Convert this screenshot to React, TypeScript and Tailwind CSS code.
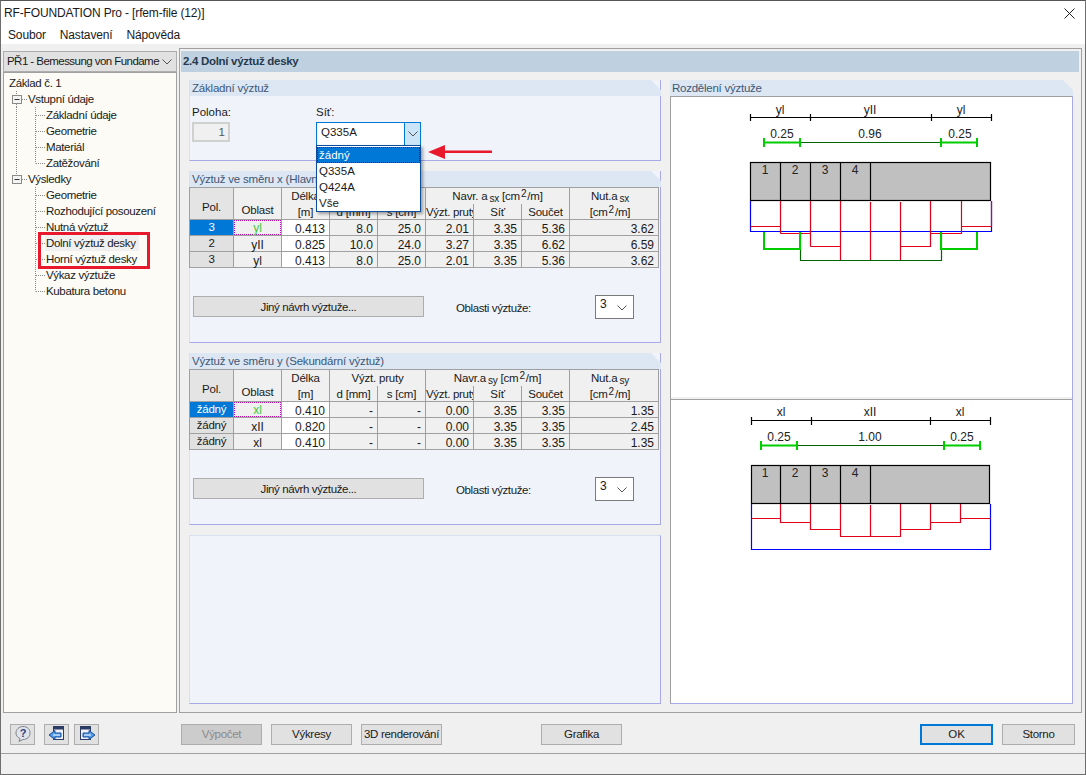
import React from "react";

const font = "font-['Liberation_Sans',Arial,sans-serif]";

type TreeRow = { label: string; kind: "root" | "group" | "child"; last?: boolean; groupLine?: boolean; selected?: boolean };

const tree: TreeRow[] = [
  { label: "Základ č. 1", kind: "root" },
  { label: "Vstupní údaje", kind: "group", groupLine: true },
  { label: "Základní údaje", kind: "child", groupLine: true },
  { label: "Geometrie", kind: "child", groupLine: true },
  { label: "Materiál", kind: "child", groupLine: true },
  { label: "Zatěžování", kind: "child", groupLine: true, last: true },
  { label: "Výsledky", kind: "group" },
  { label: "Geometrie", kind: "child" },
  { label: "Rozhodující posouzení", kind: "child" },
  { label: "Nutná výztuž", kind: "child" },
  { label: "Dolní výztuž desky", kind: "child", selected: true },
  { label: "Horní výztuž desky", kind: "child" },
  { label: "Výkaz výztuže", kind: "child" },
  { label: "Kubatura betonu", kind: "child", last: true },
];

const dots = { stroke: "#8a8a8a", strokeWidth: 1, strokeDasharray: "1 1", fill: "none" };

const TreeGuide = ({ row }: { row: TreeRow }) => {
  if (row.kind === "root") return <div className="w-[5px] shrink-0" />;
  if (row.kind === "group") {
    return (
      <svg width="24" height="16" className="shrink-0">
        <path d="M12.5 0V3" {...dots} />
        {row.groupLine && <path d="M12.5 13V16" {...dots} />}
        <path d="M18 8.5H23" {...dots} />
        <rect x="8.5" y="4.5" width="9" height="8" fill="#f4f4f4" stroke="#8a8a8a" />
        <path d="M10.5 8.5H15.5" stroke="#333" />
      </svg>
    );
  }
  return (
    <svg width="42" height="16" className="shrink-0">
      {row.groupLine && <path d="M12.5 0V16" {...dots} />}
      <path d={row.last ? "M31.5 0V8.5" : "M31.5 0V16"} {...dots} />
      <path d="M32 8.5H41" {...dots} />
    </svg>
  );
};

const Chevron = ({ className = "" }: { className?: string }) => (
  <svg width="10" height="6" viewBox="0 0 10 6" className={className}>
    <path d="M0.5 0.5L5 5L9.5 0.5" fill="none" stroke="#555" strokeWidth="1" />
  </svg>
);

const Panel = ({ title, className, children }: { title?: string; className: string; children?: React.ReactNode }) => (
  <div className={`flex flex-col shrink-0 bg-[#f0f4fa] border-r border-b border-l border-r-[#a9a9e6] border-b-[#a9a9e6] border-l-[#d9e0f0] ${className}`}>
    {title && (
      <div className="h-4 leading-4 pl-[2px] tracking-[-0.2px] text-[#3c5878] bg-[#dde6f3] shrink-0 -mr-px [clip-path:polygon(0_0,calc(100%-10px)_0,100%_10px,100%_100%,0_100%)]">
        {title}
      </div>
    )}
    {children}
  </div>
);

const cellLine = "border-r border-b border-[#a0a0a0]";
const headText = "text-[11.5px] tracking-[-0.2px]";

const Sub = ({ children }: { children: React.ReactNode }) => <span className="text-[10px] ml-[2px] align-[-2px] leading-none">{children}</span>;
const Sup = ({ children }: { children: React.ReactNode }) => <span className="text-[10px] mx-[1px] align-[3px] leading-none">{children}</span>;

type TableRow = { pol: string; area: string; len: string; d: string; s: string; bars: string; mesh: string; sum: string; req: string };

const ReinfTable = ({ head, rows }: { head: { group: string; navr: React.ReactNode; nut: React.ReactNode }; rows: TableRow[] }) => (
  <div className="grid grid-cols-[45px_48px_48px_48px_48px_48px_48px_48px_89px] grid-rows-[16px_16px_16px_16px_16px] w-[470px] text-[12px] leading-4 text-[#1a1a1a] text-center border-t border-[#a0a0a0] -ml-px">
    <div className={`row-span-2 bg-[#e4e4e4] border-l border-l-[#a0a0a0] pt-[11px] ${headText} ${cellLine}`}>Pol.</div>
    <div className={`row-span-2 bg-[#f0f0f0] pt-[14px] ${headText} ${cellLine}`}>Oblast</div>
    <div className={`row-span-2 bg-[#f0f0f0] ${headText} ${cellLine}`}>
      Délka
      <br />
      [m]
    </div>
    <div className={`col-span-2 bg-[#f0f0f0] border-r border-[#a0a0a0] ${headText}`}>{head.group}</div>
    <div className={`col-span-3 bg-[#f0f0f0] border-r border-[#a0a0a0] whitespace-nowrap ${headText}`}>{head.navr}</div>
    <div className={`row-span-2 bg-[#f0f0f0] pr-2 whitespace-nowrap ${headText} ${cellLine}`}>{head.nut}</div>
    <div className={`bg-[#f0f0f0] ${headText} ${cellLine}`}>d [mm]</div>
    <div className={`bg-[#f0f0f0] ${headText} ${cellLine}`}>s [cm]</div>
    <div className={`bg-[#f0f0f0] overflow-hidden whitespace-nowrap text-[11.5px] tracking-[-0.3px] ${cellLine}`}>Výzt. pruty</div>
    <div className={`bg-[#f0f0f0] ${headText} ${cellLine}`}>Síť</div>
    <div className={`bg-[#f0f0f0] ${headText} ${cellLine}`}>Součet</div>
    {rows.map((r, i) => {
      const num = `text-right pr-[4px] bg-[#f0f0f0] leading-[18px] ${cellLine}`;
      return (
        <React.Fragment key={i}>
          <div className={`border-l border-l-[#a0a0a0] border-b border-b-[#a0a0a0] border-r border-r-[#a0a0a0] ${headText} ${i === 0 ? "bg-[#0078d7] text-white" : "bg-[#e1e1e1] border-b-[#696969] border-r-[#696969]"}`}>
            <div className="leading-[15px]">{r.pol}</div>
          </div>
          {i === 0 ? (
            <div className={`bg-[#f0f0f0] ${cellLine}`}>
              <div className="border border-dotted border-[#c000c0] h-[15px] leading-[15px] text-[#46c83c]">{r.area}</div>
            </div>
          ) : (
            <div className={`bg-[#f0f0f0] leading-[18px] ${cellLine}`}>{r.area}</div>
          )}
          <div className={`text-right pr-[4px] bg-white leading-[18px] ${cellLine}`}>{r.len}</div>
          <div className={num}>{r.d}</div>
          <div className={num}>{r.s}</div>
          <div className={num}>{r.bars}</div>
          <div className={num}>{r.mesh}</div>
          <div className={num}>{r.sum}</div>
          <div className={num}>{r.req}</div>
        </React.Fragment>
      );
    })}
  </div>
);

const DesignRow = ({ offset }: { offset: string }) => (
  <div className={`flex items-start pl-[3px] ${offset}`}>
    <button className="w-[231px] h-[21px] mt-px bg-[#e1e1e1] border border-[#adadad] tracking-[-0.4px] leading-[18px] text-[#1a1a1a]">Jiný návrh výztuže...</button>
    <div className="ml-[32px] mt-[5px] w-[139px] tracking-[-0.4px] leading-4 text-[#1a1a1a]">Oblasti výztuže:</div>
    <div className="w-[39px] h-[24px] bg-white border border-[#7a7a7a] flex justify-between pl-[4px] pr-[3px] text-[12px] leading-[17px] text-[#1a1a1a]">
      3
      <Chevron className="mt-[9px] mr-[3px]" />
    </div>
  </div>
);

const label = { fontFamily: "Liberation Sans, Arial, sans-serif", fontSize: 12, fill: "#222", textAnchor: "middle" as const };

const Diagram = ({ v }: { v: "y" | "x" }) => {
  if (v === "y") {
    return (
      <svg width="401" height="300" viewBox="671 97 401 300" className="block">
        <path d="M750.5 117.5H991.5M750.5 114V121M810.5 114V121M931.5 114V121M991.5 114V121" stroke="#000" fill="none" strokeWidth="1.2" />
        <text x="780" y="114" {...label}>yl</text>
        <text x="870" y="114" {...label}>yII</text>
        <text x="961" y="114" {...label}>yl</text>
        <text x="782" y="138" {...label}>0.25</text>
        <text x="870" y="138" {...label}>0.96</text>
        <text x="960" y="138" {...label}>0.25</text>
        <path d="M800 142.5H941" stroke="#006400" fill="none" strokeWidth="1.2" />
        <path d="M764 142.5H800M941 142.5H977M764 138V147M800 138V147M941 138V147M977 138V147" stroke="#00cc00" strokeWidth="2" fill="none" />
        <rect x="750.5" y="162.5" width="240" height="38" fill="#c0c0c0" stroke="#000" strokeWidth="1.2" />
        <path d="M780.5 162V200M810.5 162V200M840.5 162V200M870.5 162V200" stroke="#000" strokeWidth="1.2" />
        <text x="765" y="174" {...label}>1</text>
        <text x="795" y="174" {...label}>2</text>
        <text x="825" y="174" {...label}>3</text>
        <text x="855" y="174" {...label}>4</text>
        <path d="M750.5 201V231.5H991.5V201" stroke="#0000ff" fill="none" strokeWidth="1.2" />
        <path d="M750.5 226.5H780.5V201M780.5 233.5H810.5V201M810.5 246.5H840.5V201M840.5 201V260.5M870.5 202V260.5M900.5 202V260.5M900.5 246.5H930.5V201M930.5 233.5H961.5V201M961.5 226.5H991.5V201M780.5 226V233.5M810.5 233V246.5M930.5 233V246.5M961.5 226V233.5" stroke="#e0001a" fill="none" strokeWidth="1.2" />
        <path d="M800.5 232V260.5H941.5V232" stroke="#006400" fill="none" strokeWidth="1.2" />
        <path d="M764 232V249H800V232M941 232V249H977V232" stroke="#00cc00" strokeWidth="2" fill="none" />
      </svg>
    );
  }
  return (
    <svg width="401" height="300" viewBox="671 400 401 300" className="block">
      <path d="M751.5 420.5H990.5M751.5 417V425M811.5 417V425M930.5 417V425M990.5 417V425" stroke="#000" fill="none" strokeWidth="1.2" />
      <text x="781" y="416" {...label}>xl</text>
      <text x="870" y="416" {...label}>xII</text>
      <text x="960" y="416" {...label}>xl</text>
      <text x="779" y="441" {...label}>0.25</text>
      <text x="870" y="441" {...label}>1.00</text>
      <text x="962" y="441" {...label}>0.25</text>
      <path d="M797 445.5H944" stroke="#006400" fill="none" strokeWidth="1.2" />
      <path d="M761 445.5H797M944 445.5H980M761 441V450M797 441V450M944 441V450M980 441V450" stroke="#00cc00" strokeWidth="2" fill="none" />
      <rect x="751.5" y="465.5" width="238" height="38" fill="#c0c0c0" stroke="#000" strokeWidth="1.2" />
      <path d="M780.5 465V503M810.5 465V503M840.5 465V503M870.5 465V503" stroke="#000" strokeWidth="1.2" />
      <text x="765" y="477" {...label}>1</text>
      <text x="795" y="477" {...label}>2</text>
      <text x="825" y="477" {...label}>3</text>
      <text x="855" y="477" {...label}>4</text>
      <path d="M751.5 504V549.5H990.5V504" stroke="#0000ff" fill="none" strokeWidth="1.2" />
      <path d="M751.5 518.5H780.5V504V522.5H810.5V504V529.5H840.5V504V536.5H900.5V504V529.5H930.5V504V522.5H960.5V504V518.5H990.5M870.5 505V536" stroke="#e0001a" fill="none" strokeWidth="1.2" />
    </svg>
  );
};

const FooterBtn = ({ children, className = "" }: { children?: React.ReactNode; className?: string }) => (
  <button className={`h-[21px] bg-[#e1e1e1] border border-[#adadad] tracking-[-0.3px] leading-[18px] text-[#1a1a1a] ${className}`}>{children}</button>
);

const xRows: TableRow[] = [
  { pol: "3", area: "yl", len: "0.413", d: "8.0", s: "25.0", bars: "2.01", mesh: "3.35", sum: "5.36", req: "3.62" },
  { pol: "2", area: "yII", len: "0.825", d: "10.0", s: "24.0", bars: "3.27", mesh: "3.35", sum: "6.62", req: "6.59" },
  { pol: "3", area: "yl", len: "0.413", d: "8.0", s: "25.0", bars: "2.01", mesh: "3.35", sum: "5.36", req: "3.62" },
];
const yRows: TableRow[] = [
  { pol: "žádný", area: "xl", len: "0.410", d: "-", s: "-", bars: "0.00", mesh: "3.35", sum: "3.35", req: "1.35" },
  { pol: "žádný", area: "xII", len: "0.820", d: "-", s: "-", bars: "0.00", mesh: "3.35", sum: "3.35", req: "2.45" },
  { pol: "žádný", area: "xl", len: "0.410", d: "-", s: "-", bars: "0.00", mesh: "3.35", sum: "3.35", req: "1.35" },
];

export default function App() {
  return (
    <div className={`${font} relative w-[1086px] h-[775px] flex flex-col bg-[#f0f0f0] border-x border-b border-[#6e6e6e] border-t border-t-[#555] text-[11.5px] text-[#1a1a1a] overflow-hidden`}>
      {/* title + menu */}
      <div className="h-[24px] shrink-0 bg-white flex items-center justify-between pl-[3px] pr-[10px] text-[12px] tracking-[-0.15px]">
        <span>RF-FOUNDATION Pro - [rfem-file (12)]</span>
        <svg width="11" height="11" viewBox="0 0 11 11">
          <path d="M0.5 0.5L10.5 10.5M10.5 0.5L0.5 10.5" stroke="#222" fill="none" />
        </svg>
      </div>
      <div className="h-[19px] shrink-0 bg-white flex gap-[14px] pl-[7px] text-[12px] tracking-[-0.15px] leading-[20px]">
        <span>Soubor</span>
        <span>Nastavení</span>
        <span>Nápověda</span>
      </div>

      {/* body */}
      <div className="flex flex-1 min-h-0 pt-[7px] pl-[2px] pr-[3px] gap-[2px]">
        <div className="w-[174px] shrink-0 flex flex-col">
          <div className="h-[21px] shrink-0 bg-[#e1e1e1] border border-[#adadad] flex items-center justify-between pl-[3px] pr-[4px] whitespace-nowrap overflow-hidden tracking-[-0.55px]">
            <span>PŘ1 - Bemessung von Fundame</span>
            <Chevron />
          </div>
          <div className="relative flex-1 bg-[#fcfbf5] border border-[#a0a0a0] pt-[2px] tracking-[-0.35px]">
            {tree.map((row, i) => (
              <div key={i} className="flex h-4 items-center leading-4 whitespace-nowrap">
                <TreeGuide row={row} />
                <span className={row.selected ? "bg-[#f0f0f0] pr-[3px] pl-px -ml-px" : ""}>{row.label}</span>
              </div>
            ))}
            <div className="absolute left-[34px] top-[159px] w-[112px] h-[37px] border-[3px] border-[#e8192c]" />
          </div>
        </div>

        <div className="flex-1 flex flex-col border border-[#a0a0a0] -mt-[3px] pt-[2px] px-px pr-[2px] min-w-0">
          <div className="h-[21px] shrink-0 bg-[#bfd1e0] pl-[2px] leading-[20px] font-bold text-[#263a4e] tracking-[-0.3px]">2.4 Dolní výztuž desky</div>
          <div className="flex-1 flex gap-[9px] pt-[8px] pl-[8px] min-h-0">
            <div className="w-[472px] flex flex-col gap-[10px] shrink-0">
              <Panel title="Základní výztuž" className="h-[81px]">
                <div className="flex pl-[2px] pt-[8px]">
                  <div className="w-[124px]">
                    <div className="h-4 leading-4">Poloha:</div>
                    <div className="mt-[2px] w-[38px] h-[20px] bg-[#f0f0f0] border-2 border-[#d0d0d0] text-right pr-[3px] leading-4 text-[#555]">1</div>
                  </div>
                  <div className="relative">
                    <div className="h-4 leading-4">Síť:</div>
                    <div className="mt-[2px] w-[105px] h-[24px] bg-white border border-[#0078d7] flex justify-between pl-[4px] leading-[19px]">
                      Q335A
                      <div className="w-[16px] bg-[#cce4f7] border-l border-[#0078d7] flex items-center justify-center">
                        <Chevron />
                      </div>
                    </div>
                    <div className="absolute left-0 top-[41px] z-10 w-[105px] h-[67px] bg-white border border-[#0b4f9c] shadow-[2px_2px_3px_rgba(0,0,0,0.35)] pt-px leading-4">
                      <div className="h-4 bg-[#0078d7] text-white border border-dotted border-[#0a2a55] pl-[1px] leading-[14px]">žádný</div>
                      <div className="h-4 pl-[2px]">Q335A</div>
                      <div className="h-4 pl-[2px]">Q424A</div>
                      <div className="h-4 pl-[2px]">Vše</div>
                    </div>
                    <svg width="66" height="18" viewBox="0 0 66 18" className="absolute left-[111px] top-[39px] z-10">
                      <path d="M1 9L18 2V7.5H65V10H18V16Z" fill="#e8192c" />
                    </svg>
                  </div>
                </div>
              </Panel>

              <Panel title="Výztuž ve směru x (Hlavní výztuž)" className="h-[172px]">
                <ReinfTable
                  rows={xRows}
                  head={{
                    group: "Výzt. pruty",
                    navr: <>Navr. a<Sub>sx</Sub> [cm<Sup>2</Sup>/m]</>,
                    nut: <>Nut.a<Sub>sx</Sub><br />[cm<Sup>2</Sup>/m]</>,
                  }}
                />
                <DesignRow offset="mt-[27px]" />
              </Panel>

              <Panel title="Výztuž ve směru y (Sekundární výztuž)" className="h-[172px]">
                <ReinfTable
                  rows={yRows}
                  head={{
                    group: "Výzt. pruty",
                    navr: <>Navr.a<Sub>sy</Sub> [cm<Sup>2</Sup>/m]</>,
                    nut: <>Nut.a<Sub>sy</Sub><br />[cm<Sup>2</Sup>/m]</>,
                  }}
                />
                <DesignRow offset="mt-[27px]" />
              </Panel>

              <div className="h-[169px] shrink-0 bg-[#f0f4fa] border border-[#d9e0f0] border-r-[#a9a9e6] border-b-[#a9a9e6]" />
            </div>

            <div className="w-[403px] shrink-0 flex flex-col h-[624px]">
              <div className="h-4 shrink-0 leading-4 pl-[2px] tracking-[-0.25px] text-[#3c5878] bg-[#dde6f3] [clip-path:polygon(0_0,calc(100%-10px)_0,100%_10px,100%_100%,0_100%)]">Rozdělení výztuže</div>
              <div className="flex-1 flex flex-col bg-white border-l border-t border-[#a0a0a0] border-r border-r-[#a9a9e6] border-b border-b-[#a9a9e6]">
                <Diagram v="y" />
                <div className="h-[3px] shrink-0 border-b border-[#a0a0a0] bg-[#f0f0f0]" />
                <Diagram v="x" />
              </div>
            </div>
          </div>
        </div>
      </div>

      {/* buttons */}
      <div className="h-[39px] shrink-0 flex items-center pl-[9px] pr-[10px] border-b border-[#a0a0a0] mt-[2px] bg-[#f0f0f0]">
        <FooterBtn className="w-[25px] flex items-center justify-center">
          <svg width="18" height="18" viewBox="0 0 18 18">
            <path d="M9 1.5C13.5 1.5 16 4.5 16 8C16 12 13 14.5 9 14.5L5 16.5L6 13.5C3.5 12.5 2 10.5 2 8C2 4.5 5 1.5 9 1.5Z" fill="#dfe3ea" stroke="#7d828c" />
            <text x="9" y="12" textAnchor="middle" fontSize="11" fontWeight="bold" fill="#2a3f7f" fontFamily="Liberation Sans">?</text>
          </svg>
        </FooterBtn>
        <FooterBtn className="w-[25px] ml-[9px] flex items-center justify-center">
          <svg width="18" height="18" viewBox="0 0 18 18">
            <rect x="5.5" y="1.5" width="10" height="13" fill="#eef2f8" stroke="#2b3d66" />
            <rect x="5.5" y="1.5" width="10" height="3" fill="#2b3d66" />
            <path d="M1 10L7 5.5V8H13V12H7V14.5Z" fill="#4f9be8" stroke="#1d4f9c" />
            <path d="M5 10H12" stroke="#ffffff" />
          </svg>
        </FooterBtn>
        <FooterBtn className="w-[25px] ml-[5px] flex items-center justify-center">
          <svg width="18" height="18" viewBox="0 0 18 18">
            <rect x="2.5" y="1.5" width="10" height="13" fill="#eef2f8" stroke="#2b3d66" />
            <rect x="2.5" y="1.5" width="10" height="3" fill="#2b3d66" />
            <path d="M17 10L11 5.5V8H5V12H11V14.5Z" fill="#4f9be8" stroke="#1d4f9c" />
            <path d="M6 10H13" stroke="#ffffff" />
          </svg>
        </FooterBtn>
        <FooterBtn className="w-[81px] ml-[82px] !bg-[#cccccc] !text-[#8a8a8a]">Výpočet</FooterBtn>
        <FooterBtn className="w-[81px] ml-[9px]">Výkresy</FooterBtn>
        <FooterBtn className="w-[81px] ml-[9px] whitespace-nowrap">3D renderování</FooterBtn>
        <FooterBtn className="w-[81px] ml-[99px]">Grafika</FooterBtn>
        <button className="w-[73px] h-[21px] ml-auto bg-[#e1e1e1] border-2 border-[#0078d7] leading-[17px]">OK</button>
        <FooterBtn className="w-[73px] ml-[9px]">Storno</FooterBtn>
      </div>
      <div className="flex-none h-[20px] bg-[#f0f0f0]" />
    </div>
  );
}
